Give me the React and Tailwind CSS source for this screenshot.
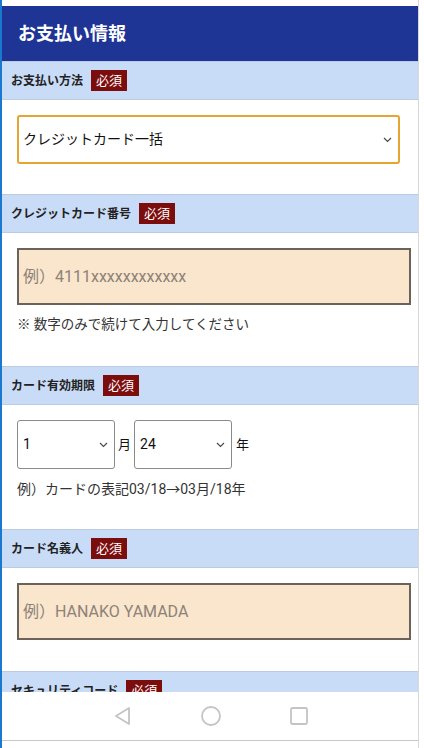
import React from "react";

const font = { fontFamily: 'Roboto, "Noto Sans CJK JP", sans-serif' };

function Badge() {
  return (
    <span className="ml-2 inline-flex h-[21px] items-center bg-[#7c0d0d] px-[5px] text-[13px] font-normal leading-none text-white">
      必須
    </span>
  );
}

function LabelBar({ children }) {
  return (
    <div className="flex h-[39px] shrink-0 items-center border-y border-[#bccbe0] bg-[#c9dcf7] pl-[9px] text-[12px] font-bold text-[#222]">
      <span>{children}</span>
      <Badge />
    </div>
  );
}

function Chevron() {
  return (
    <svg width="9" height="6" viewBox="0 0 9 6" className="shrink-0">
      <path d="M1 1l3.5 3.5L8 1" fill="none" stroke="#444" strokeWidth="1.1" />
    </svg>
  );
}

export default function App() {
  return (
    <div className="flex h-[748px] w-[424px] overflow-hidden bg-white" style={font}>
      <div className="w-[2px] shrink-0 bg-[#1b78cf]" />
      <div className="flex w-[416px] shrink-0 flex-col">
        <div className="h-[6px] shrink-0 bg-white" />
        <div className="flex h-[55px] shrink-0 items-center bg-[#1e3595] pl-[16px] text-[18px] font-bold text-white">
          お支払い情報
        </div>

        <div className="flex flex-1 flex-col overflow-hidden">
          <LabelBar>お支払い方法</LabelBar>
          <div className="h-[94px] shrink-0 px-[15px] pt-[15px]">
            <div className="flex h-[49px] w-[383px] items-center justify-between rounded-[3px] border-2 border-[#e6a532] pl-[4px] pr-[6px] text-[14px] text-[#111]">
              <span>クレジットカード一括</span>
              <Chevron />
            </div>
          </div>

          <LabelBar>クレジットカード番号</LabelBar>
          <div className="h-[133px] shrink-0 px-[15px] pt-[15px]">
            <div className="flex h-[57px] w-[394px] items-center border-2 border-[#6c6259] bg-[#fae6cc] pl-[4px] text-[16px] text-[#8c8279]">
              例）4111xxxxxxxxxxxx
            </div>
            <div className="mt-[9px] text-[13.5px] text-[#333]">※ 数字のみで続けて入力してください</div>
          </div>

          <LabelBar>カード有効期限</LabelBar>
          <div className="h-[124px] shrink-0 px-[15px] pt-[15px]">
            <div className="flex items-center text-[14px] text-[#111]">
              <div className="flex h-[49px] w-[98px] items-center justify-between rounded-[3px] border border-[#8a8a8a] pl-[5px] pr-[6px]">
                <span>1</span>
                <Chevron />
              </div>
              <span className="mx-[3px] text-[13px]">月</span>
              <div className="flex h-[49px] w-[98px] items-center justify-between rounded-[3px] border border-[#8a8a8a] pl-[5px] pr-[6px]">
                <span>24</span>
                <Chevron />
              </div>
              <span className="ml-[4px] text-[13px]">年</span>
            </div>
            <div className="mt-[10px] text-[14px] text-[#333]">例）カードの表記03/18→03月/18年</div>
          </div>

          <LabelBar>カード名義人</LabelBar>
          <div className="h-[103px] shrink-0 px-[15px] pt-[15px]">
            <div className="flex h-[57px] w-[394px] items-center border-2 border-[#6c6259] bg-[#fae6cc] pl-[4px] text-[16px] text-[#8c8279]">
              例）HANAKO YAMADA
            </div>
          </div>

          <LabelBar>セキュリティコード</LabelBar>
        </div>

        <div className="flex h-[49px] shrink-0 items-center justify-center gap-[64px] border-b border-[#c8c8c8] bg-white pl-[2px]">
          <svg width="24" height="24" viewBox="0 0 24 24">
            <path d="M18 4v16L5 12z" fill="none" stroke="#c4c4c4" strokeWidth="1.8" strokeLinejoin="round" />
          </svg>
          <svg width="24" height="24" viewBox="0 0 24 24">
            <circle cx="12" cy="12" r="9" fill="none" stroke="#c4c4c4" strokeWidth="1.8" />
          </svg>
          <svg width="24" height="24" viewBox="0 0 24 24">
            <rect x="4" y="4" width="16" height="16" rx="1.5" fill="none" stroke="#c4c4c4" strokeWidth="1.8" />
          </svg>
        </div>
        <div className="h-[7px] shrink-0 bg-white" />
      </div>
      <div className="w-[6px] shrink-0 border-l border-[#d8d8d8] bg-white" />
    </div>
  );
}
